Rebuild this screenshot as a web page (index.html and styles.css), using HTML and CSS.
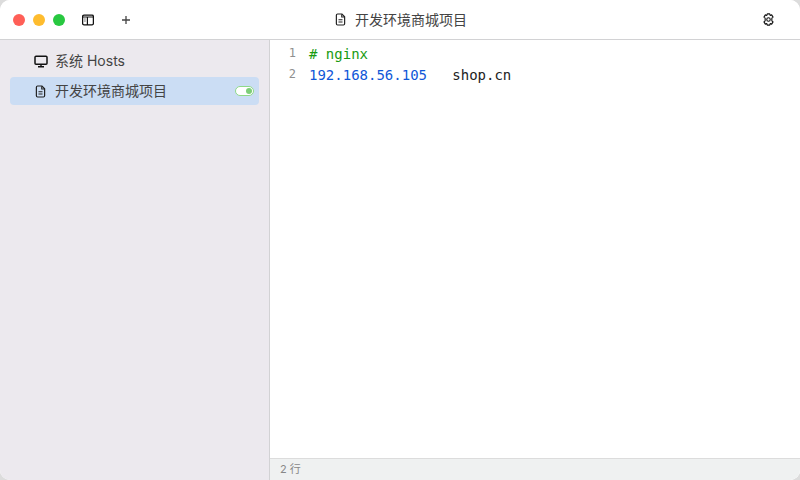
FILE: index.html
```html
<!DOCTYPE html>
<html lang="zh-CN">
<head>
<meta charset="utf-8">
<title>SwitchHosts</title>
<link rel="stylesheet" href="styles.css">
</head>
<body>
<div class="window">
  <header class="topbar">
    <div class="top-left">
      <div class="lights">
        <span class="light red"></span>
        <span class="light yellow"></span>
        <span class="light green"></span>
      </div>
      <svg class="icon panel-icon" viewBox="0 0 12 12" width="12" height="12"><rect x="0.6" y="1.1" width="10.8" height="9.8" rx="1.4" fill="none" stroke="#111" stroke-width="1.3"/><path d="M0.6 3H11.4M5.4 3V10.9" fill="none" stroke="#111" stroke-width="1.2"/><path d="M2 5H3.8M2 7H3.8" stroke="#666" stroke-width="0.9"/></svg>
      <svg class="icon plus-icon" viewBox="0 0 10 10" width="10" height="10"><path d="M5 1V9M1 5H9" stroke="#444" stroke-width="1.3" fill="none"/></svg>
    </div>
    <div class="top-title">
      <svg class="icon" viewBox="0 0 12 14" width="11" height="13"><path d="M1.5 2.3A1.3 1.3 0 0 1 2.8 1H7.6L10.5 4V11.7A1.3 1.3 0 0 1 9.2 13H2.8A1.3 1.3 0 0 1 1.5 11.7Z" fill="none" stroke="#222" stroke-width="1.3"/><path d="M7.3 1.2V4.3H10.3M3.8 7.2H8.2M3.8 9.8H8.2" fill="none" stroke="#222" stroke-width="1.1"/></svg>
      <span>开发环境商城项目</span>
    </div>
    <div class="top-right">
      <svg class="icon" viewBox="0 0 14 14" width="13" height="13"><path d="M5.7 1H8.3L8.8 2.6L10.4 2L11.9 4.4L10.6 5.6V8.4L11.9 9.6L10.4 12L8.8 11.4L8.3 13H5.7L5.2 11.4L3.6 12L2.1 9.6L3.4 8.4V5.6L2.1 4.4L3.6 2L5.2 2.6Z" fill="none" stroke="#111" stroke-width="1.2" stroke-linejoin="round"/><circle cx="7" cy="7" r="1.9" fill="none" stroke="#111" stroke-width="1.2"/></svg>
    </div>
  </header>
  <div class="main">
    <aside class="sidebar">
      <div class="item">
        <svg class="icon" viewBox="0 0 14 13" width="14" height="13"><rect x="1" y="1.2" width="12" height="8" rx="1" fill="none" stroke="#111" stroke-width="1.5"/><path d="M7 9.2V11.5M4 11.7H10" stroke="#111" stroke-width="1.4" fill="none"/></svg>
        <span class="item-label">系统 Hosts</span>
      </div>
      <div class="item selected">
        <svg class="icon" viewBox="0 0 12 14" width="11" height="13"><path d="M1.5 2.3A1.3 1.3 0 0 1 2.8 1H7.6L10.5 4V11.7A1.3 1.3 0 0 1 9.2 13H2.8A1.3 1.3 0 0 1 1.5 11.7Z" fill="none" stroke="#222" stroke-width="1.3"/><path d="M7.3 1.2V4.3H10.3M3.8 7.2H8.2M3.8 9.8H8.2" fill="none" stroke="#222" stroke-width="1.1"/></svg>
        <span class="item-label">开发环境商城项目</span>
        <span class="toggle"><span class="knob"></span></span>
      </div>
    </aside>
    <section class="editor">
      <div class="code">
        <div class="line"><span class="num">1</span><span class="text comment"># nginx</span></div>
        <div class="line"><span class="num">2</span><span class="text"><span class="ip">192.168.56.105</span>   shop.cn</span></div>
      </div>
      <footer class="status">2 行</footer>
    </section>
  </div>
</div>
</body>
</html>
```
FILE: styles.css
```css
* { box-sizing: border-box; }
html, body { margin: 0; height: 100%; }
body {
  background: #dcdcdc;
  font-family: Inter, "Noto Sans CJK SC", sans-serif;
  overflow: hidden;
}
.window {
  width: 800px;
  height: 480px;
  border-radius: 10px;
  overflow: hidden;
  display: flex;
  flex-direction: column;
  background: #fff;
}
.topbar {
  height: 40px;
  flex: none;
  display: flex;
  align-items: center;
  justify-content: space-between;
  position: relative;
  background: #fff;
  border-bottom: 1px solid #d2d2d4;
}
.top-left { display: flex; align-items: center; padding-left: 13px; }
.lights { display: flex; gap: 8px; }
.light { width: 12px; height: 12px; border-radius: 50%; }
.red { background: #ff5f57; }
.yellow { background: #febc2e; }
.green { background: #28c840; }
.icon { display: block; flex: none; }
.panel-icon { margin-left: 17px; }
.plus-icon { margin-left: 27px; }
.top-title {
  position: absolute;
  left: 335px;
  top: 0;
  height: 39px;
  display: flex;
  align-items: center;
  gap: 9px;
  font-size: 14px;
  color: #444;
}
.top-title span { position: relative; top: -1px; }
.top-right { padding-right: 25px; }
.main { flex: 1; display: flex; min-height: 0; }
.sidebar {
  width: 270px;
  flex: none;
  background: #ece9ee;
  border-right: 1px solid #d2d2d4;
  padding: 7px 10px 0;
  display: flex;
  flex-direction: column;
  gap: 2px;
}
.item {
  height: 28px;
  display: flex;
  align-items: center;
  gap: 7px;
  padding-left: 24px;
  padding-right: 5px;
  border-radius: 4px;
  font-size: 14px;
  color: #444;
}
.item.selected { background: #cbddf4; gap: 9px; padding-left: 25px; }
.item-label { flex: 1; position: relative; top: -1px; }
.toggle {
  width: 19px;
  height: 10px;
  border-radius: 5px;
  border: 1px solid #8fd98a;
  background: #fff;
  display: flex;
  align-items: center;
  justify-content: flex-end;
  padding-right: 1px;
}
.knob { width: 6px; height: 6px; border-radius: 50%; background: #7dce78; }
.editor { flex: 1; display: flex; flex-direction: column; min-width: 0; background: #fff; }
.code {
  flex: 1;
  padding-top: 4px;
  font-family: "DejaVu Sans Mono", monospace;
  font-size: 14px;
  line-height: 21px;
  color: #222;
}
.line { display: flex; height: 21px; }
.text { white-space: pre; }
.num {
  width: 39px;
  flex: none;
  padding-right: 13px;
  text-align: right;
  font-size: 12px;
  line-height: 19px;
  color: #8f8f8f;
}
.comment { color: #1a9b12; }
.ip { color: #0f57d8; }
.status {
  height: 22px;
  flex: none;
  background: #eff1f1;
  border-top: 1px solid #dcdcdc;
  padding-left: 10px;
  font-size: 11px;
  line-height: 20px;
  color: #888;
}
```
